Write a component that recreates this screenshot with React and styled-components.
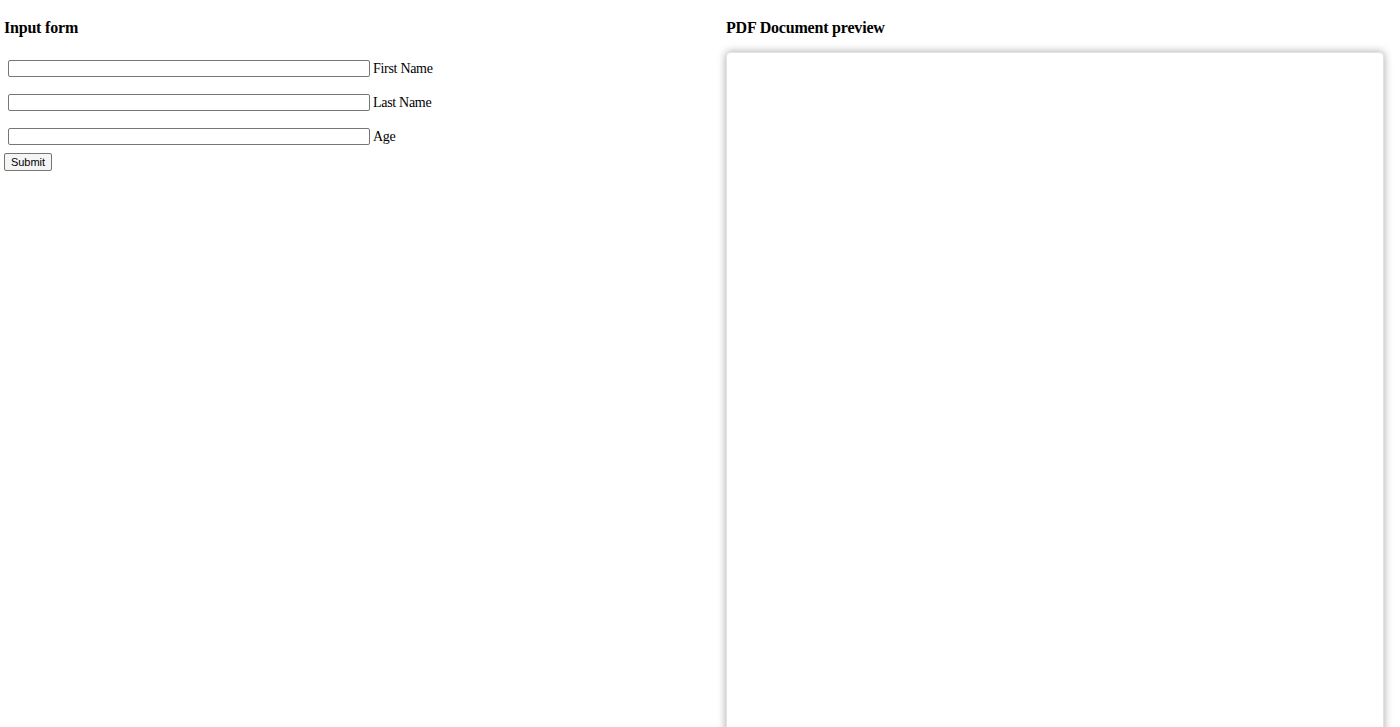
import styled, { createGlobalStyle } from "styled-components";

const GlobalStyle = createGlobalStyle`
  html, body {
    margin: 0;
    padding: 0;
    background: #fff;
    overflow: hidden;
  }
  body {
    font-family: "Liberation Serif", "Times New Roman", serif;
    color: #000;
  }
`

const Page = styled.div`
  display: flex;
  padding: 0 4px;
`
const FormColumn = styled.div`
  width: 722px;
  flex-shrink: 0;
`
const PreviewColumn = styled.div`
  width: 658px;
  flex-shrink: 0;
`
const Heading = styled.h4`
  font-size: 16px;
  font-weight: bold;
  letter-spacing: -0.2px;
  margin: 19px 0 15px 0;
  line-height: 18px;
`
const Form = styled.form`
  display: flex;
  flex-direction: column;
`
const Fields = styled.div`
  display: flex;
  flex-direction: column;
  gap: 17px;
  padding: 8px 4px 8px 4px;
`
const Row = styled.label`
  display: flex;
  align-items: center;
  gap: 3px;
  font-size: 14px;
  letter-spacing: -0.3px;
  height: 17px;
  line-height: 15px;
`
const TextInput = styled.input`
  width: 362px;
  height: 17px;
  box-sizing: border-box;
  border: 1px solid #767676;
  border-radius: 2px;
  padding: 0 3px;
  margin: 0;
  font-size: 12px;
  background: #fff;
`
const SubmitButton = styled.button`
  align-self: flex-start;
  width: 48px;
  height: 18px;
  padding: 0;
  margin: 0;
  font-family: "Liberation Sans", Arial, sans-serif;
  font-size: 11px;
  color: #000;
  background: #f5f5f5;
  border: 1px solid #767676;
  border-radius: 2px;
`
const PdfPage = styled.div`
  width: 658px;
  height: 930px;
  box-sizing: border-box;
  background: #fff;
  border: 1px solid #e2e2e2;
  border-radius: 4px;
  box-shadow: 0 0 9px rgba(0, 0, 0, 0.35);
`

const fields = ["First Name", "Last Name", "Age"];

function App() {
  return (
    <>
      <GlobalStyle />
      <Page>
        <FormColumn>
          <Heading>Input form</Heading>
          <Form onSubmit={e => e.preventDefault()}>
            <Fields>
              {fields.map(name => (
                <Row key={name}>
                  <TextInput type="text" />
                  {name}
                </Row>
              ))}
            </Fields>
            <SubmitButton type="submit">Submit</SubmitButton>
          </Form>
        </FormColumn>
        <PreviewColumn>
          <Heading>PDF Document preview</Heading>
          <PdfPage />
        </PreviewColumn>
      </Page>
    </>
  );
}

export default App;
